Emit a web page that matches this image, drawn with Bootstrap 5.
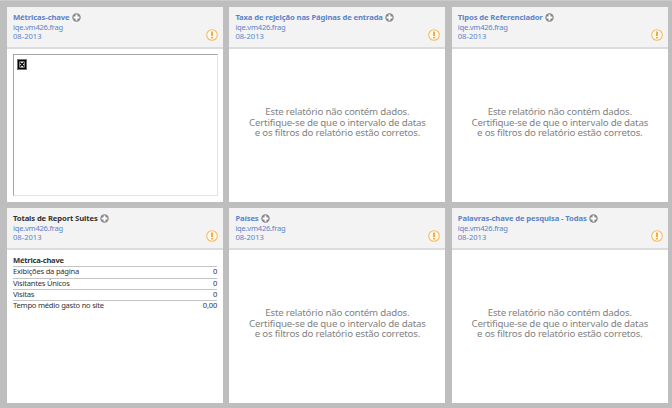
<!DOCTYPE html>
<html lang="pt">
<head>
<meta charset="utf-8">
<meta name="viewport" content="width=device-width, initial-scale=1">
<title>Painel</title>
<link href="https://cdn.jsdelivr.net/npm/bootstrap@5.3.0/dist/css/bootstrap.min.css" rel="stylesheet">
<style>
body{background:#bebebe;font-family:"Noto Sans","Open Sans",sans-serif;width:672px;height:408px;overflow:hidden;border-top:1px solid #cbcbcb}
.board{display:grid;grid-template-columns:216px 216px 216px;grid-template-rows:195px 195px;column-gap:6.4px;row-gap:6px;padding:6px 0 0 7px}
.panel{background:#fff;border-radius:0;border:0}
.panel-head{height:42px;background:#f3f3f3;border-bottom:2px solid #dcdcdc;padding:5px 5px 0 6px;font-size:7.6px;line-height:9.4px;color:#5d84c8}
.panel-title{font-size:7.7px;letter-spacing:-.13px;line-height:11px;font-weight:700;white-space:nowrap}
.suite{letter-spacing:-.25px}
.dark{color:#333}
.plus{width:9px;height:9px;margin-left:2px}
.warn{width:12px;height:12px;margin-bottom:6px}
.note{font-size:9.7px;letter-spacing:-.19px;line-height:10.7px;color:#828282;padding-bottom:5px;white-space:nowrap}
.frame{height:142px;margin:5px 5px 0 6px;border:1px solid #e3e3e3;border-top-color:#a5a5a5;border-left-color:#a5a5a5;padding:4px 3px}
.metrics{margin:5px 6px 0;font-size:7.6px;letter-spacing:-.23px;line-height:9.4px;color:#333}
.metrics>div{height:11.35px;border-top:1px solid #c4c4c4}
.metrics>div:first-child{border-top-color:transparent}
</style>
<script src="https://cdn.jsdelivr.net/npm/bootstrap@5.3.0/dist/js/bootstrap.bundle.min.js"></script>
</head>
<body>
<svg class="d-none">
<symbol id="plus" viewBox="0 0 9 9"><circle cx="4.5" cy="4.5" r="4.2" fill="#858585"/><path d="M4.5 1.6v5.8M1.6 4.5h5.8" stroke="#fff" stroke-width="1.9"/></symbol>
<symbol id="warn" viewBox="0 0 12 12"><circle cx="6" cy="6" r="5.3" fill="#fffaf0" stroke="#f6bd65" stroke-width="1.1"/><path d="M6 2.4v4.5M6 8v1.6" stroke="#f2a431" stroke-width="1.8"/></symbol>
</svg>
<main class="board">
<section class="panel d-flex flex-column">
<header class="panel-head d-flex justify-content-between align-items-end"><div class="align-self-start"><div class="panel-title d-flex align-items-center"><span>Métricas-chave</span><svg class="plus"><use href="#plus"/></svg></div><div class="suite">iqe.vm426.frag</div><div>08-2013</div></div><svg class="warn"><use href="#warn"/></svg></header>
<div class="frame"><svg class="d-block" width="10" height="11" viewBox="0 0 10 11"><path fill="#777" d="M0 0h10v11H0z"/><path fill="#fff" stroke="#000" stroke-width="1.5" d="M1.7 1.7h6.6v7.6H1.7z"/><path d="M3 3.5l4 4m0-4l-4 4" stroke="#000" stroke-width="1.3"/></svg></div>
</section>
<section class="panel d-flex flex-column">
<header class="panel-head d-flex justify-content-between align-items-end"><div class="align-self-start"><div class="panel-title d-flex align-items-center"><span>Taxa de rejeição nas Páginas de entrada</span><svg class="plus"><use href="#plus"/></svg></div><div class="suite">iqe.vm426.frag</div><div>08-2013</div></div><svg class="warn"><use href="#warn"/></svg></header>
<div class="note flex-grow-1 d-flex align-items-center justify-content-center text-center"><span>Este relatório não contém dados.<br>Certifique-se de que o intervalo de datas<br>e os filtros do relatório estão corretos.</span></div>
</section>
<section class="panel d-flex flex-column">
<header class="panel-head d-flex justify-content-between align-items-end"><div class="align-self-start"><div class="panel-title d-flex align-items-center"><span>Tipos de Referenciador</span><svg class="plus"><use href="#plus"/></svg></div><div class="suite">iqe.vm426.frag</div><div>08-2013</div></div><svg class="warn"><use href="#warn"/></svg></header>
<div class="note flex-grow-1 d-flex align-items-center justify-content-center text-center"><span>Este relatório não contém dados.<br>Certifique-se de que o intervalo de datas<br>e os filtros do relatório estão corretos.</span></div>
</section>
<section class="panel d-flex flex-column">
<header class="panel-head d-flex justify-content-between align-items-end"><div class="align-self-start"><div class="panel-title dark d-flex align-items-center"><span>Totais de Report Suites</span><svg class="plus"><use href="#plus"/></svg></div><div class="suite">iqe.vm426.frag</div><div>08-2013</div></div><svg class="warn"><use href="#warn"/></svg></header>
<div class="metrics">
<div class="fw-bold">Métrica-chave</div>
<div class="d-flex justify-content-between"><span>Exibições da página</span><span>0</span></div>
<div class="d-flex justify-content-between"><span>Visitantes Únicos</span><span>0</span></div>
<div class="d-flex justify-content-between"><span>Visitas</span><span>0</span></div>
<div class="d-flex justify-content-between"><span>Tempo médio gasto no site</span><span>0,00</span></div>
</div>
</section>
<section class="panel d-flex flex-column">
<header class="panel-head d-flex justify-content-between align-items-end"><div class="align-self-start"><div class="panel-title d-flex align-items-center"><span>Países</span><svg class="plus"><use href="#plus"/></svg></div><div class="suite">iqe.vm426.frag</div><div>08-2013</div></div><svg class="warn"><use href="#warn"/></svg></header>
<div class="note flex-grow-1 d-flex align-items-center justify-content-center text-center"><span>Este relatório não contém dados.<br>Certifique-se de que o intervalo de datas<br>e os filtros do relatório estão corretos.</span></div>
</section>
<section class="panel d-flex flex-column">
<header class="panel-head d-flex justify-content-between align-items-end"><div class="align-self-start"><div class="panel-title d-flex align-items-center"><span>Palavras-chave de pesquisa - Todas</span><svg class="plus"><use href="#plus"/></svg></div><div class="suite">iqe.vm426.frag</div><div>08-2013</div></div><svg class="warn"><use href="#warn"/></svg></header>
<div class="note flex-grow-1 d-flex align-items-center justify-content-center text-center"><span>Este relatório não contém dados.<br>Certifique-se de que o intervalo de datas<br>e os filtros do relatório estão corretos.</span></div>
</section>
</main>
</body>
</html>
